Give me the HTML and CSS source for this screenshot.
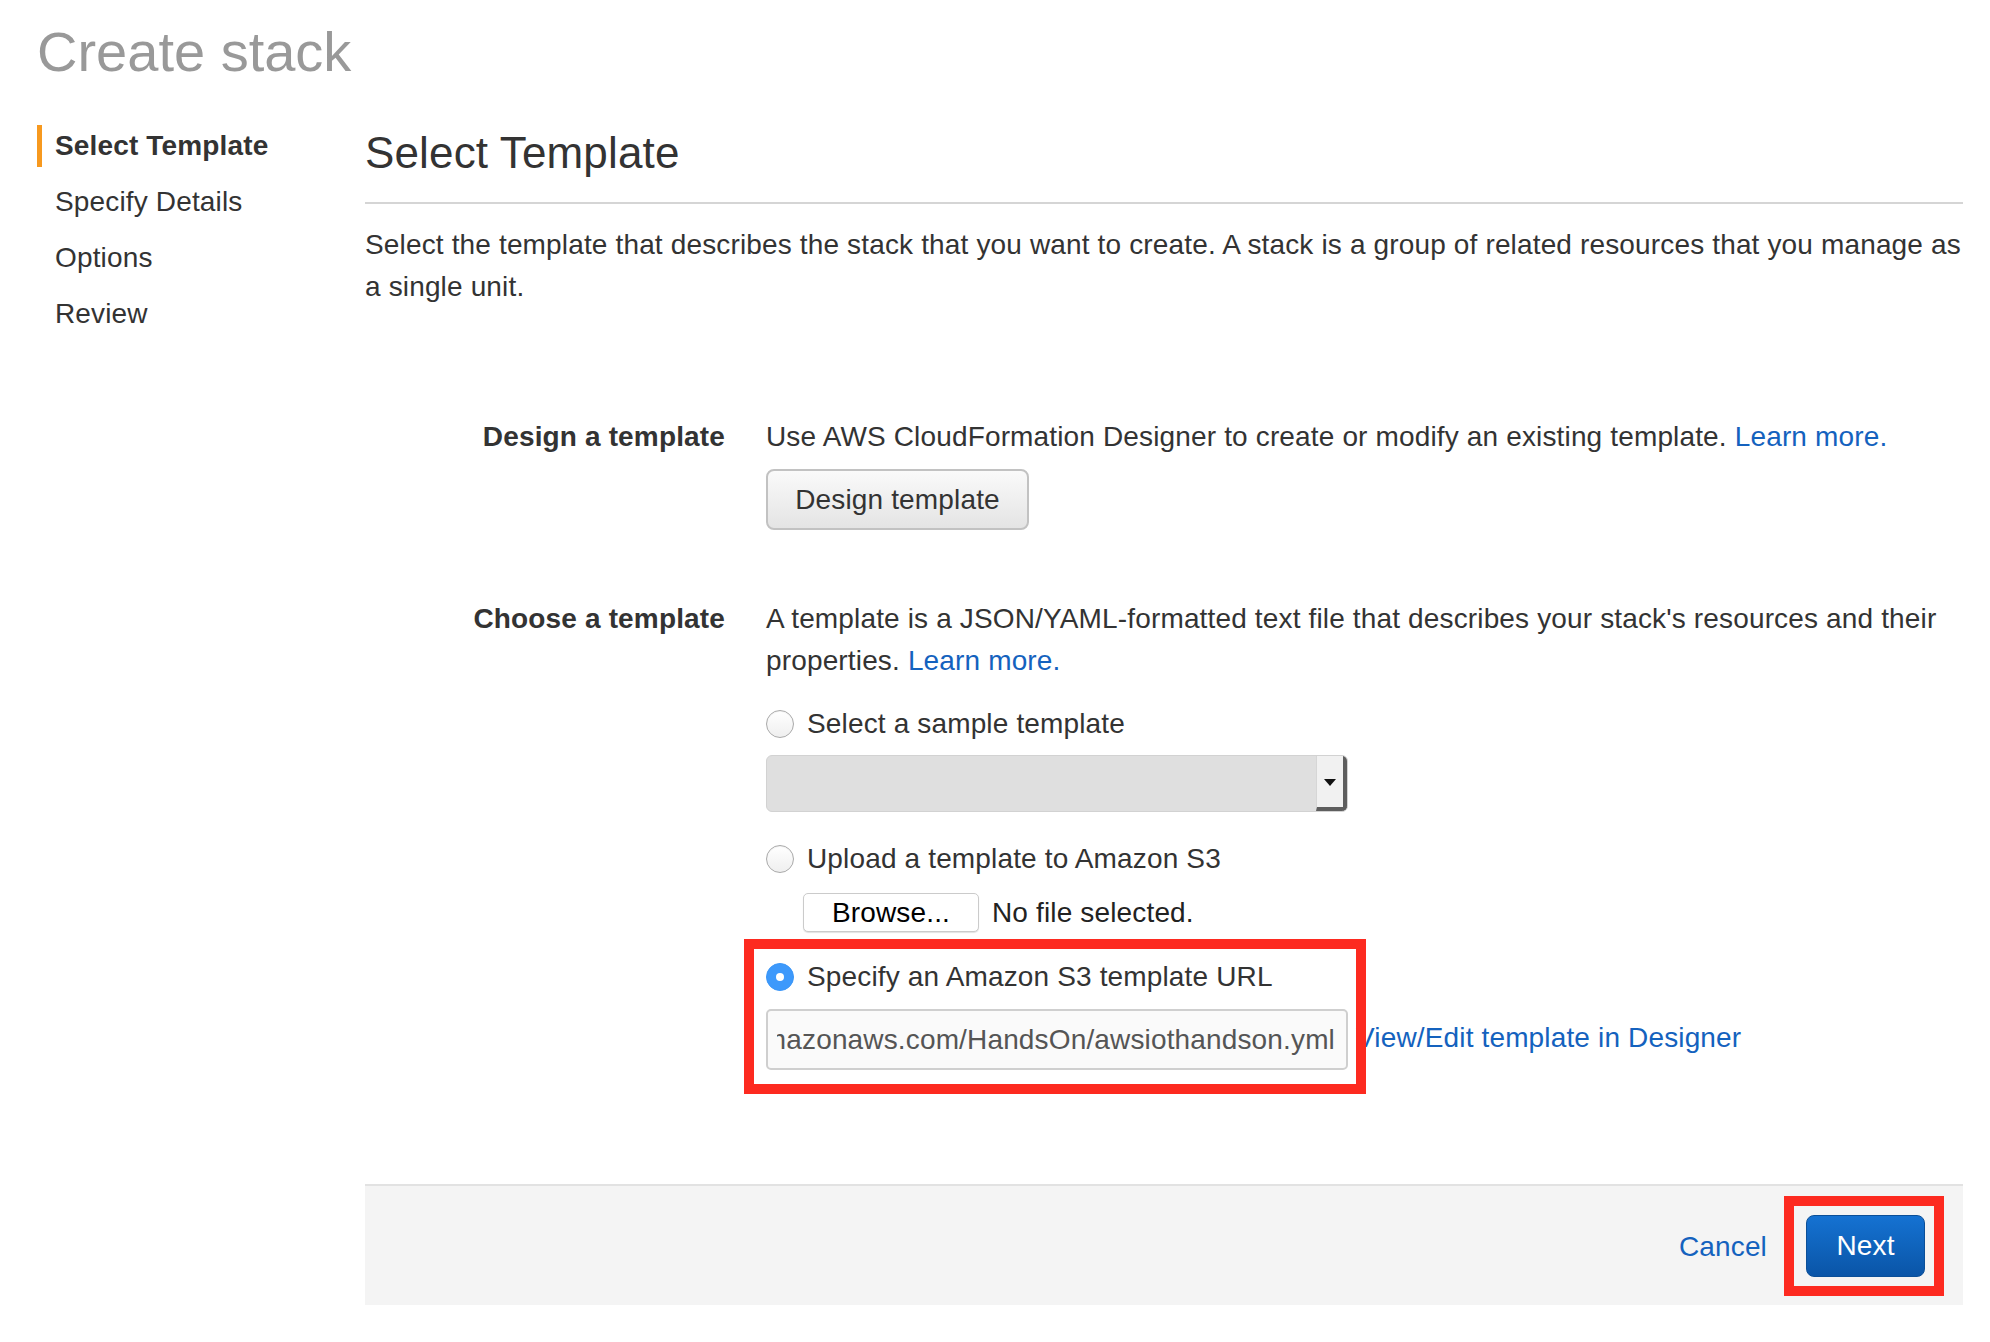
FILE: index.html
```html
<!DOCTYPE html>
<html lang="en">
<head>
<meta charset="utf-8">
<title>Create stack</title>
<link rel="stylesheet" href="styles.css">
</head>
<body>
<div class="page">
  <h1 class="page-title">Create stack</h1>
  <div class="layout">
    <ul class="steps">
      <li class="step active">Select Template</li>
      <li class="step">Specify Details</li>
      <li class="step">Options</li>
      <li class="step">Review</li>
    </ul>
    <div class="main">
      <h2 class="main-title">Select Template</h2>
      <div class="divider"></div>
      <p class="intro">Select the template that describes the stack that you want to create. A stack is a group of related resources that you manage as<br>a single unit.</p>

      <div class="field field-design">
        <div class="field-label">Design a template</div>
        <div class="field-body">
          <p class="field-text">Use AWS CloudFormation Designer to create or modify an existing template. <a class="link" href="#">Learn more.</a></p>
          <button class="btn-default" type="button">Design template</button>
        </div>
      </div>

      <div class="field field-choose">
        <div class="field-label">Choose a template</div>
        <div class="field-body">
          <p class="field-text">A template is a JSON/YAML-formatted text file that describes your stack's resources and their<br>properties. <a class="link" href="#">Learn more.</a></p>

          <div class="option option-sample">
            <span class="radio"></span>
            <span class="option-label">Select a sample template</span>
          </div>
          <div class="select">
            <div class="select-arrow"><span class="caret"></span></div>
          </div>

          <div class="option option-upload">
            <span class="radio"></span>
            <span class="option-label">Upload a template to Amazon S3</span>
          </div>
          <div class="file-row">
            <button class="btn-browse" type="button">Browse...</button>
            <span class="file-name">No file selected.</span>
          </div>

          <div class="url-group">
            <div class="option option-url">
              <span class="radio checked"></span>
              <span class="option-label">Specify an Amazon S3 template URL</span>
            </div>
            <div class="url-row">
              <div class="url-input"><div class="url-clip"><span class="url-value">https://s3-ap-northeast-1.amazonaws.com/HandsOn/awsiothandson.yml</span></div></div>
              <a class="link designer-link" href="#">View/Edit template in Designer</a>
            </div>
            <div class="highlight highlight-url"></div>
          </div>
        </div>
      </div>

      <div class="footer">
        <a class="link cancel" href="#">Cancel</a>
        <div class="next-wrap">
          <button class="btn-primary" type="button">Next</button>
          <div class="highlight highlight-next"></div>
        </div>
      </div>
    </div>
  </div>
</div>
</body>
</html>
```
FILE: styles.css
```css
* { box-sizing: border-box; }

body {
  margin: 0;
  background: #fff;
  font-family: "Liberation Sans", Arial, Helvetica, sans-serif;
  font-size: 28px;
  letter-spacing: 0.15px;
  color: #333;
}

.page {
  padding: 20px 27px 0 37px;
}

.page-title {
  margin: 0;
  font-size: 56px;
  line-height: 64px;
  font-weight: normal;
  letter-spacing: 0;
  color: #999;
}

.layout {
  display: flex;
  margin-top: 41px;
}

.steps {
  width: 328px;
  flex: none;
  list-style: none;
  margin: 0;
  padding: 0;
  display: flex;
  flex-direction: column;
  gap: 14px;
}

.step {
  height: 42px;
  line-height: 42px;
  padding-left: 13px;
  border-left: 5px solid transparent;
  color: #333;
}

.step.active {
  border-left-color: #f7991f;
  font-weight: bold;
}

.main {
  flex: 1;
  min-width: 0;
  margin-top: 2px;
}

.main-title {
  margin: 0;
  font-size: 44px;
  line-height: 52px;
  font-weight: normal;
  color: #333;
}

.divider {
  margin-top: 23px;
  border-top: 2px solid #d5d5d5;
}

.intro {
  margin: 20px 0 0;
  line-height: 42px;
  white-space: nowrap;
}

.field {
  display: grid;
  grid-template-columns: 360px 1fr;
  column-gap: 41px;
}

.field-design { margin-top: 108px; }
.field-choose { margin-top: 68px; }

.field-label {
  text-align: right;
  font-weight: bold;
  line-height: 42px;
}

.field-body { min-width: 0; }

.field-text {
  margin: 0;
  line-height: 42px;
  white-space: nowrap;
}

.link {
  color: #1462be;
  text-decoration: none;
}

.btn-default {
  display: flex;
  align-items: center;
  justify-content: center;
  margin-top: 11px;
  width: 263px;
  height: 61px;
  padding: 0;
  font: inherit;
  letter-spacing: inherit;
  color: #333;
  background: linear-gradient(#fafafa, #e4e4e4);
  border: 2px solid #c2c2c2;
  border-radius: 8px;
}

.option {
  display: flex;
  align-items: center;
  gap: 13px;
  height: 42px;
  line-height: 42px;
}

.option-sample { margin-top: 21px; }
.option-upload { margin-top: 26px; }

.radio {
  flex: none;
  width: 28px;
  height: 28px;
  border-radius: 50%;
  border: 1px solid #aaaaaa;
  background: linear-gradient(#ffffff, #efefef);
  box-shadow: inset 0 1px 1px rgba(0,0,0,0.05);
  display: flex;
  align-items: center;
  justify-content: center;
}

.radio.checked {
  border-color: #3a96f8;
  background: #3d99fb;
  box-shadow: none;
}

.radio.checked::after {
  content: "";
  width: 8px;
  height: 8px;
  border-radius: 50%;
  background: #fff;
}

.select {
  margin-top: 10px;
  width: 582px;
  height: 57px;
  background: #dfdfdf;
  border: 1px solid #d2d2d2;
  border-radius: 6px;
  display: flex;
  justify-content: flex-end;
  overflow: hidden;
}

.select-arrow {
  width: 31px;
  height: 100%;
  background: #f1f1f1;
  border-left: 1px solid #d6d6d6;
  border-right: 4px solid #5e5e5e;
  border-bottom: 4px solid #5e5e5e;
  border-bottom-right-radius: 4px;
  display: flex;
  align-items: center;
  justify-content: center;
  padding-top: 2px;
}

.caret {
  width: 0;
  height: 0;
  border-left: 6px solid transparent;
  border-right: 6px solid transparent;
  border-top: 7px solid #111;
}

.file-row {
  display: flex;
  align-items: center;
  gap: 13px;
  margin-top: 13px;
  margin-left: 37px;
}

.btn-browse {
  width: 176px;
  height: 39px;
  padding: 0;
  font: inherit;
  letter-spacing: inherit;
  color: #000;
  background: #fff;
  border: 1px solid #cbcbcb;
  border-radius: 5px;
  box-shadow: 0 1px 1px rgba(0,0,0,0.12);
  display: flex;
  align-items: center;
  justify-content: center;
}

.file-name {
  color: #222;
  line-height: 39px;
}

.url-group {
  position: relative;
  margin-top: 24px;
  width: 582px;
}

.url-row {
  display: flex;
  align-items: center;
  margin-top: 11px;
  width: max-content;
}

.url-input {
  width: 582px;
  height: 61px;
  background: #fafafa;
  border: 2px solid #cfcfcf;
  border-radius: 5px;
  padding: 0 11px 0 9px;
  display: flex;
  align-items: center;
  color: #555;
}

.url-clip {
  flex: 1;
  min-width: 0;
  display: flex;
  justify-content: flex-end;
  overflow: hidden;
  white-space: nowrap;
}

.url-value {
  flex: none;
}

.designer-link {
  margin-left: 8px;
  padding-bottom: 4px;
}

.highlight {
  position: absolute;
  border: 10px solid #fd2a20;
  pointer-events: none;
}

.highlight-url {
  top: -17px;
  left: -22px;
  right: -18px;
  bottom: -24px;
}

.footer {
  margin-top: 114px;
  border-top: 2px solid #e2e2e2;
  background: #f4f4f4;
  padding: 29px 38px 28px 0;
  display: flex;
  justify-content: flex-end;
  align-items: center;
  gap: 39px;
}

.cancel {
  padding-top: 2px;
}

.next-wrap {
  position: relative;
}

.btn-primary {
  display: flex;
  align-items: center;
  justify-content: center;
  width: 119px;
  height: 62px;
  padding: 0;
  font: inherit;
  letter-spacing: inherit;
  color: #fff;
  background: linear-gradient(#1572d2, #0a55a7);
  border: 1px solid #0b4f98;
  border-radius: 8px;
}

.highlight-next {
  top: -19px;
  left: -22px;
  right: -19px;
  bottom: -19px;
}
```
